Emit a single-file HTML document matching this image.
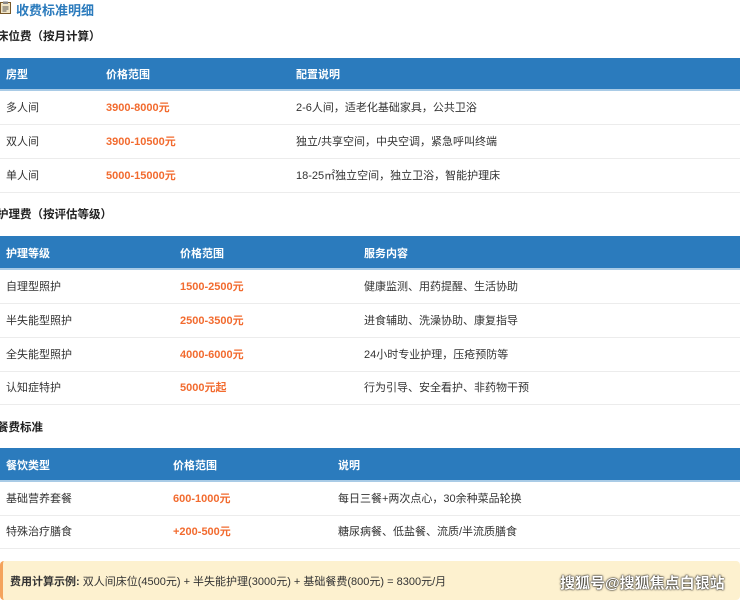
<!DOCTYPE html>
<html><head><meta charset="utf-8"><style>
*{margin:0;padding:0;box-sizing:border-box}
body{width:740px;height:600px;overflow:hidden;background:#fff;font-family:"Liberation Sans","Noto Sans CJK SC",sans-serif;font-size:11px;color:#333;position:relative}
.a{position:absolute;white-space:nowrap}
.t{font-weight:bold;font-size:11.5px;color:#222;left:-3px}
.h{position:absolute;left:0;width:740px;background:#2b7bbd;color:#fff;font-weight:bold;border-bottom:2px solid #a9cbe6}
.r{position:absolute;left:0;width:740px;border-bottom:1px solid #ececec}
.p{color:#f26b2f;font-weight:bold}
</style></head><body>
<svg class="a" style="left:0;top:1px" width="11" height="13" viewBox="0 0 11 13"><rect x="0.5" y="1.5" width="10" height="11" fill="#f2e6c8" stroke="#7a5a2a"/><rect x="3" y="0.5" width="5" height="2.5" fill="#888"/><path d="M2.5 6h6M2.5 8h6M2.5 10h4" stroke="#555"/></svg>
<div class="a" style="left:16px;top:0;font-size:13px;font-weight:bold;color:#2b7bbd">收费标准明细</div>
<div class="a t" style="top:28px">床位费（按月计算）</div>

<div class="h" style="top:58px;height:33px"><span class="a" style="left:6px;top:8px">房型</span><span class="a" style="left:106px;top:8px">价格范围</span><span class="a" style="left:296px;top:8px">配置说明</span></div>
<div class="r" style="top:91px;height:34px"><span class="a" style="left:6px;top:8px">多人间</span><span class="a p" style="left:106px;top:8px">3900-8000元</span><span class="a" style="left:296px;top:8px">2-6人间，适老化基础家具，公共卫浴</span></div>
<div class="r" style="top:125px;height:34px"><span class="a" style="left:6px;top:8px">双人间</span><span class="a p" style="left:106px;top:8px">3900-10500元</span><span class="a" style="left:296px;top:8px">独立/共享空间，中央空调，紧急呼叫终端</span></div>
<div class="r" style="top:159px;height:34px"><span class="a" style="left:6px;top:8px">单人间</span><span class="a p" style="left:106px;top:8px">5000-15000元</span><span class="a" style="left:296px;top:8px">18-25㎡独立空间，独立卫浴，智能护理床</span></div>

<div class="a t" style="top:206px">护理费（按评估等级）</div>
<div class="h" style="top:236px;height:34px"><span class="a" style="left:6px;top:9px">护理等级</span><span class="a" style="left:180px;top:9px">价格范围</span><span class="a" style="left:364px;top:9px">服务内容</span></div>
<div class="r" style="top:270px;height:34px"><span class="a" style="left:6px;top:8px">自理型照护</span><span class="a p" style="left:180px;top:8px">1500-2500元</span><span class="a" style="left:364px;top:8px">健康监测、用药提醒、生活协助</span></div>
<div class="r" style="top:304px;height:34px"><span class="a" style="left:6px;top:8px">半失能型照护</span><span class="a p" style="left:180px;top:8px">2500-3500元</span><span class="a" style="left:364px;top:8px">进食辅助、洗澡协助、康复指导</span></div>
<div class="r" style="top:338px;height:34px"><span class="a" style="left:6px;top:8px">全失能型照护</span><span class="a p" style="left:180px;top:8px">4000-6000元</span><span class="a" style="left:364px;top:8px">24小时专业护理，压疮预防等</span></div>
<div class="r" style="top:372px;height:33px"><span class="a" style="left:6px;top:7px">认知症特护</span><span class="a p" style="left:180px;top:7px">5000元起</span><span class="a" style="left:364px;top:7px">行为引导、安全看护、非药物干预</span></div>

<div class="a t" style="top:419px">餐费标准</div>
<div class="h" style="top:448px;height:34px"><span class="a" style="left:6px;top:9px">餐饮类型</span><span class="a" style="left:173px;top:9px">价格范围</span><span class="a" style="left:338px;top:9px">说明</span></div>
<div class="r" style="top:482px;height:34px"><span class="a" style="left:6px;top:8px">基础营养套餐</span><span class="a p" style="left:173px;top:8px">600-1000元</span><span class="a" style="left:338px;top:8px">每日三餐+两次点心，30余种菜品轮换</span></div>
<div class="r" style="top:516px;height:33px"><span class="a" style="left:6px;top:7px">特殊治疗膳食</span><span class="a p" style="left:173px;top:7px">+200-500元</span><span class="a" style="left:338px;top:7px">糖尿病餐、低盐餐、流质/半流质膳食</span></div>

<div class="a" style="left:0;top:561px;width:740px;height:39px;background:#fdf1cf;border-left:3px solid #f4a35c;border-radius:4px"></div>
<div class="a" style="left:10px;top:573px"><b>费用计算示例:</b> 双人间床位(4500元) + 半失能护理(3000元) + 基础餐费(800元) = 8300元/月</div>
<div class="a" style="left:560px;top:572px;font-size:15px;color:#fff;font-weight:bold;text-shadow:0 0 2px #000,0 0 1px #000">搜狐号@搜狐焦点白银站</div>
</body></html>
